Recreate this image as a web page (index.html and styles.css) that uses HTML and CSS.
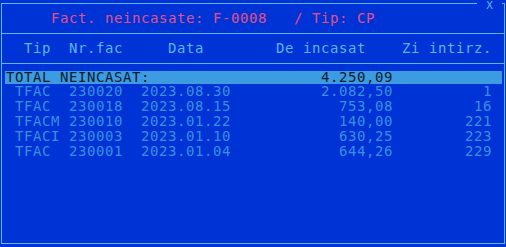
FILE: index.html
```html
<!DOCTYPE html>
<html>
<head>
<meta charset="utf-8">
<link rel="stylesheet" href="styles.css">
</head>
<body>
<div class="window">
  <span class="close">X</span>
  <div class="title">     Fact. neincasate: F-0008   / Tip: CP</div>
  <div class="header">  Tip  Nr.fac     Data        De incasat    Zi intirz.</div>
  <div class="list">
    <div class="row total">TOTAL NEINCASAT:                   4.250,09</div>
    <div class="row"> TFAC  230020  2023.08.30          2.082,50          1</div>
    <div class="row"> TFAC  230018  2023.08.15            753,08         16</div>
    <div class="row"> TFACM 230010  2023.01.22            140,00        221</div>
    <div class="row"> TFACI 230003  2023.01.10            630,25        223</div>
    <div class="row"> TFAC  230001  2023.01.04            644,26        229</div>
  </div>
</div>
</body>
</html>
```
FILE: styles.css
```css
html, body {
  margin: 0;
  padding: 0;
  background: #0033d6;
}
body {
  width: 506px;
  height: 247px;
  overflow: hidden;
  font-family: "DejaVu Sans Mono", "Liberation Mono", monospace;
  font-size: 14px;
  letter-spacing: 0.57px;
}
.window {
  position: relative;
  margin: 3px 0 0 1px;
  width: 502px;
  height: 239px;
  border: 1px solid #5fb6ee;
  display: flex;
  flex-direction: column;
}
.close {
  position: absolute;
  top: -3px;
  right: 2px;
  width: 25px;
  text-align: center;
  background: #0033d6;
  color: #5fb6ee;
  line-height: 9px;
  font-size: 11px;
  letter-spacing: 0;
}
.title {
  height: 29px;
  line-height: 29px;
  padding-left: 4px;
  white-space: pre;
  color: #e0508a;
  border-bottom: 1px solid #5fb6ee;
}
.header {
  height: 29px;
  line-height: 29px;
  padding-left: 4px;
  white-space: pre;
  color: #5cb6f0;
  border-bottom: 1px solid #5fb6ee;
}
.list {
  padding: 7px 2px 0 3px;
  display: flex;
  flex-direction: column;
}
.row {
  height: 15px;
  line-height: 15px;
  padding-left: 1px;
  white-space: pre;
  color: #3c8ee0;
}
.row.total {
  height: 13px;
  line-height: 13px;
  background: #3d9be2;
  color: #0a1a2e;
}
```
